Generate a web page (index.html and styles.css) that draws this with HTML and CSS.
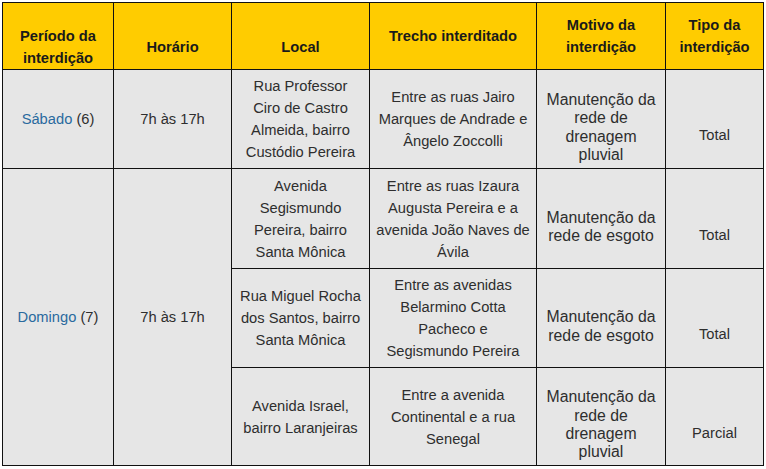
FILE: index.html
```html
<!DOCTYPE html>
<html lang="pt-BR">
<head>
<meta charset="utf-8">
<title>Interdições</title>
<link rel="stylesheet" href="styles.css">
</head>
<body>
<div class="wrap">
<table class="grid">
  <colgroup>
    <col class="c1"><col class="c2"><col class="c3"><col class="c4"><col class="c5"><col class="c6">
  </colgroup>
  <thead>
    <tr class="rh">
      <th class="low">Período da interdição</th>
      <th class="low">Horário</th>
      <th class="low">Local</th>
      <th>Trecho interditado</th>
      <th>Motivo da interdição</th>
      <th>Tipo da interdição</th>
    </tr>
  </thead>
  <tbody>
    <tr class="r1">
      <td><a href="#">Sábado</a> (6)</td>
      <td>7h às 17h</td>
      <td>Rua Professor Ciro de Castro Almeida, bairro Custódio Pereira</td>
      <td class="tr">Entre as ruas Jairo Marques de Andrade e Ângelo Zoccolli</td>
      <td class="mot">Manutenção da rede de drenagem pluvial</td>
      <td class="tipo">Total</td>
    </tr>
    <tr class="r2">
      <td rowspan="3"><a href="#">Domingo</a> (7)</td>
      <td rowspan="3">7h às 17h</td>
      <td>Avenida Segismundo Pereira, bairro Santa Mônica</td>
      <td class="tr">Entre as ruas Izaura Augusta Pereira e a avenida João Naves de Ávila</td>
      <td class="mot">Manutenção da rede de esgoto</td>
      <td class="tipo">Total</td>
    </tr>
    <tr class="r3">
      <td>Rua Miguel Rocha dos Santos, bairro Santa Mônica</td>
      <td class="tr">Entre as avenidas Belarmino Cotta Pacheco e<br>Segismundo Pereira</td>
      <td class="mot">Manutenção da rede de esgoto</td>
      <td class="tipo">Total</td>
    </tr>
    <tr class="r4">
      <td>Avenida Israel, bairro Laranjeiras</td>
      <td class="tr">Entre a avenida Continental e a rua Senegal</td>
      <td class="mot">Manutenção da rede de drenagem pluvial</td>
      <td class="tipo">Parcial</td>
    </tr>
  </tbody>
</table>
</div>
</body>
</html>
```

FILE: styles.css
```css
html, body {
  margin: 0;
  padding: 0;
  background: #ffffff;
}

.wrap {
  padding: 2px 0 0 2px;
}

.grid {
  table-layout: fixed;
  border-collapse: separate;
  border-spacing: 0;
  width: 761px;
  border-top: 1px solid #111;
  border-left: 1px solid #111;
  font-family: "Liberation Sans", Arial, sans-serif;
  font-size: 14.7px;
  line-height: 22px;
  color: #2e2e2e;
}

.c1 { width: 111px; }
.c2 { width: 118px; }
.c3 { width: 138px; }
.c4 { width: 167px; }
.c5 { width: 129px; }
.c6 { width: 98px; }

.grid th,
.grid td {
  border-right: 1px solid #111;
  border-bottom: 1px solid #111;
  text-align: center;
  vertical-align: middle;
  padding: 0 8px;
  box-sizing: border-box;
}

.grid th {
  background: #ffcc00;
  color: #1a1a1a;
  font-weight: bold;
}

.grid td {
  background: #e6e6e6;
}

.grid th.low {
  padding-top: 22px;
}

.grid td.tr {
  padding: 0 5px;
}

.grid td.mot {
  font-size: 15.8px;
  line-height: 18.4px;
  padding-top: 17px;
}

.grid td.tipo {
  padding-top: 32px;
}

.grid a {
  color: #2a6a9e;
  text-decoration: none;
}

.rh { height: 66px; }
.r1 { height: 99px; }
.r2 { height: 100px; }
.r3 { height: 99px; }
.r4 { height: 98px; }
```
